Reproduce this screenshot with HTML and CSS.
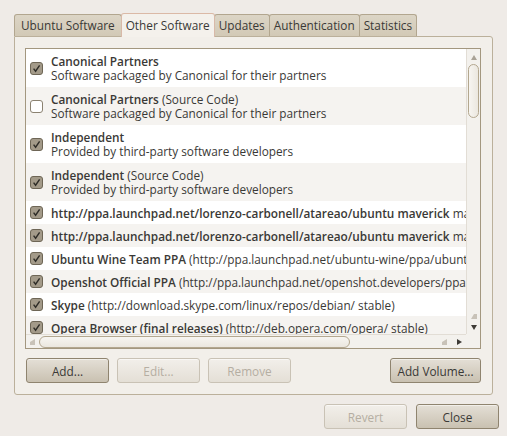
FILE: index.html
```html
<!DOCTYPE html>
<html>
<head>
<meta charset="utf-8">
<link rel="stylesheet" href="styles.css">
</head>
<body>
<div class="window">
  <div class="tabs">
    <div class="tab">Ubuntu Software</div>
    <div class="tab active">Other Software</div>
    <div class="tab">Updates</div>
    <div class="tab">Authentication</div>
    <div class="tab">Statistics</div>
  </div>
  <div class="panel">
    <div class="list">
      <div class="rows">
        <div class="row two">
          <span class="cb on"><svg width="13" height="13" viewBox="0 0 13 13"><rect x=".5" y=".5" width="12" height="12" rx="2.5"/><path d="M3.6 6.6 L5.6 9.2 L9.6 3.4"/></svg></span>
          <div class="txt"><div><b>Canonical Partners</b></div><div>Software packaged by Canonical for their partners</div></div>
        </div>
        <div class="row two">
          <span class="cb off"><svg width="13" height="13" viewBox="0 0 13 13"><rect x=".5" y=".5" width="12" height="12" rx="2.5"/></svg></span>
          <div class="txt"><div><b>Canonical Partners</b> (Source Code)</div><div>Software packaged by Canonical for their partners</div></div>
        </div>
        <div class="row two">
          <span class="cb on"><svg width="13" height="13" viewBox="0 0 13 13"><rect x=".5" y=".5" width="12" height="12" rx="2.5"/><path d="M3.6 6.6 L5.6 9.2 L9.6 3.4"/></svg></span>
          <div class="txt"><div><b>Independent</b></div><div>Provided by third-party software developers</div></div>
        </div>
        <div class="row two">
          <span class="cb on"><svg width="13" height="13" viewBox="0 0 13 13"><rect x=".5" y=".5" width="12" height="12" rx="2.5"/><path d="M3.6 6.6 L5.6 9.2 L9.6 3.4"/></svg></span>
          <div class="txt"><div><b>Independent</b> (Source Code)</div><div>Provided by third-party software developers</div></div>
        </div>
        <div class="row">
          <span class="cb on"><svg width="13" height="13" viewBox="0 0 13 13"><rect x=".5" y=".5" width="12" height="12" rx="2.5"/><path d="M3.6 6.6 L5.6 9.2 L9.6 3.4"/></svg></span>
          <div class="txt"><b>http://ppa.launchpad.net/lorenzo-carbonell/atareao/ubuntu maverick</b> main</div>
        </div>
        <div class="row">
          <span class="cb on"><svg width="13" height="13" viewBox="0 0 13 13"><rect x=".5" y=".5" width="12" height="12" rx="2.5"/><path d="M3.6 6.6 L5.6 9.2 L9.6 3.4"/></svg></span>
          <div class="txt"><b>http://ppa.launchpad.net/lorenzo-carbonell/atareao/ubuntu maverick</b> main</div>
        </div>
        <div class="row">
          <span class="cb on"><svg width="13" height="13" viewBox="0 0 13 13"><rect x=".5" y=".5" width="12" height="12" rx="2.5"/><path d="M3.6 6.6 L5.6 9.2 L9.6 3.4"/></svg></span>
          <div class="txt"><b>Ubuntu Wine Team PPA</b> (http://ppa.launchpad.net/ubuntu-wine/ppa/ubuntu maverick main)</div>
        </div>
        <div class="row">
          <span class="cb on"><svg width="13" height="13" viewBox="0 0 13 13"><rect x=".5" y=".5" width="12" height="12" rx="2.5"/><path d="M3.6 6.6 L5.6 9.2 L9.6 3.4"/></svg></span>
          <div class="txt"><b>Openshot Official PPA</b> (http://ppa.launchpad.net/openshot.developers/ppa/ubuntu maverick main)</div>
        </div>
        <div class="row">
          <span class="cb on"><svg width="13" height="13" viewBox="0 0 13 13"><rect x=".5" y=".5" width="12" height="12" rx="2.5"/><path d="M3.6 6.6 L5.6 9.2 L9.6 3.4"/></svg></span>
          <div class="txt"><b>Skype</b> (http://download.skype.com/linux/repos/debian/ stable)</div>
        </div>
        <div class="row">
          <span class="cb on"><svg width="13" height="13" viewBox="0 0 13 13"><rect x=".5" y=".5" width="12" height="12" rx="2.5"/><path d="M3.6 6.6 L5.6 9.2 L9.6 3.4"/></svg></span>
          <div class="txt"><b>Opera Browser (final releases)</b> (http://deb.opera.com/opera/ stable)</div>
        </div>
      </div>
      <div class="vscroll">
        <span class="arrow up"></span>
        <span class="vthumb"></span>
        <span class="fill"></span>
        <span class="arrow up faded"></span>
        <span class="arrow down"></span>
      </div>
      <div class="hscroll">
        <span class="arrow left faded"></span>
        <span class="hthumb"></span>
        <span class="fill"></span>
        <span class="arrow left faded"></span>
        <span class="arrow right"></span>
      </div>
      <div class="corner"></div>
    </div>
    <div class="btnrow">
      <button class="btn">Add...</button>
      <button class="btn" disabled>Edit...</button>
      <button class="btn" disabled>Remove</button>
      <span class="fill"></span>
      <button class="btn">Add Volume...</button>
    </div>
  </div>
  <div class="footer">
    <button class="btn" disabled>Revert</button>
    <button class="btn">Close</button>
  </div>
</div>
</body>
</html>
```
FILE: styles.css
```css
html, body {
  margin: 0;
  padding: 0;
}
body {
  background: #efebe7;
  font-family: "Open Sans", "DejaVu Sans", sans-serif;
  font-size: 11.8px;
  color: #3a3936;
  width: 507px;
  height: 436px;
  overflow: hidden;
}
b {
  font-weight: 600;
}
.window {
  padding: 13px 8px 0 14px;
}
.tabs {
  display: flex;
  align-items: flex-end;
  height: 24px;
  position: relative;
  z-index: 1;
}
.tab {
  height: 22px;
  box-sizing: border-box;
  padding: 0 4px;
  border: 1px solid #b2a68f;
  border-bottom: none;
  border-radius: 3px 3px 0 0;
  background: linear-gradient(#dcd5c6, #d2c9b6);
  line-height: 20px;
  margin-right: -1px;
  margin-bottom: 1px;
  white-space: nowrap;
}
.tab:first-child {
  padding: 0 6px;
}
.tab.active {
  height: 24px;
  margin-bottom: 0;
  background: #f4f1ec;
  border-color: #dbb9a6 #d8b9a8 transparent #d8b9a8;
  line-height: 22px;
  position: relative;
  z-index: 2;
}
.panel {
  margin-top: -1px;
  margin-right: 6px;
  border: 1px solid #bbb09b;
  border-radius: 0 3px 3px 3px;
  background: #f2efea;
  padding: 11px 11px 11px 10px;
  height: 359px;
  box-sizing: border-box;
  display: flex;
  flex-direction: column;
}
.list {
  height: 301px;
  box-sizing: border-box;
  border: 1px solid #a3977f;
  background: #fff;
  display: grid;
  grid-template-columns: 1fr 14px;
  grid-template-rows: 1fr 14px;
}
.rows {
  overflow: hidden;
  min-width: 0;
}
.row {
  display: flex;
  align-items: center;
  height: 23px;
  white-space: nowrap;
  padding-left: 4px;
}
.row.two {
  height: 38px;
}
.row:nth-child(even) {
  background: #f5f3f0;
}
.txt {
  margin-left: 8px;
  line-height: 14px;
}
.cb {
  display: flex;
  flex: none;
  width: 13px;
  height: 13px;
}
.cb rect {
  stroke: #6e6656;
  fill: #a39a89;
}
.cb path {
  fill: none;
  stroke: #2e2c27;
  stroke-width: 1.4;
}
.cb.off rect {
  fill: #fff;
  stroke: #8b8271;
}
.vscroll {
  background: #f3f1ed;
  border-left: 1px solid #e2ddd5;
  display: flex;
  flex-direction: column;
  align-items: center;
  padding: 4px 0 2px;
}
.hscroll {
  background: #f3f1ed;
  border-top: 1px solid #e2ddd5;
  display: flex;
  align-items: center;
  padding: 0 0 0 4px;
}
.corner {
  background: #f3f1ed;
}
.fill {
  flex: 1;
}
.arrow {
  width: 0;
  height: 0;
  flex: none;
}
.arrow.up {
  border-left: 3.5px solid transparent;
  border-right: 3.5px solid transparent;
  border-bottom: 5px solid #a9a296;
  margin: 2px 0 3px;
}
.arrow.down {
  border-left: 3.5px solid transparent;
  border-right: 3.5px solid transparent;
  border-top: 5px solid #3e3b36;
  margin: 3px 0 2px;
}
.arrow.left {
  border-top: 3.5px solid transparent;
  border-bottom: 3.5px solid transparent;
  border-right: 5px solid #a9a296;
  margin: 0 4px 0 0;
}
.arrow.right {
  border-top: 3.5px solid transparent;
  border-bottom: 3.5px solid transparent;
  border-left: 5px solid #3e3b36;
  margin: 0 4px 0 6px;
}
.arrow.up.faded, .arrow.left.faded {
  border-bottom-color: #c8c2b8;
  border-right-color: #c8c2b8;
}
.vthumb {
  width: 11px;
  height: 54px;
  box-sizing: border-box;
  border: 1px solid #b3a78f;
  border-radius: 6px;
  background: linear-gradient(90deg, #f7f5f1, #ebe7df);
  margin-top: 1px;
}
.hthumb {
  width: 311px;
  height: 12px;
  box-sizing: border-box;
  border: 1px solid #b3a78f;
  border-radius: 6px;
  background: linear-gradient(#f7f5f1, #ebe7df);
}
.btnrow {
  display: flex;
  gap: 8px;
  margin-top: 9px;
  padding-left: 1px;
}
.btn {
  font: inherit;
  color: #3a3936;
  width: 83px;
  height: 25px;
  box-sizing: border-box;
  border: 1px solid #8f846f;
  border-radius: 3px;
  background: linear-gradient(#e4dfd6, #c9c1b1);
  padding: 0;
  margin: 0;
  box-shadow: inset 0 1px 0 rgba(255,255,255,0.5);
}
.btn:disabled {
  color: #b5aea2;
  border-color: #c9c2b5;
  background: linear-gradient(#f2efea, #e4dfd6);
}
.btnrow .btn:last-child {
  width: 91px;
}
.footer {
  display: flex;
  justify-content: flex-end;
  gap: 9px;
  margin-top: 9px;
}
```
